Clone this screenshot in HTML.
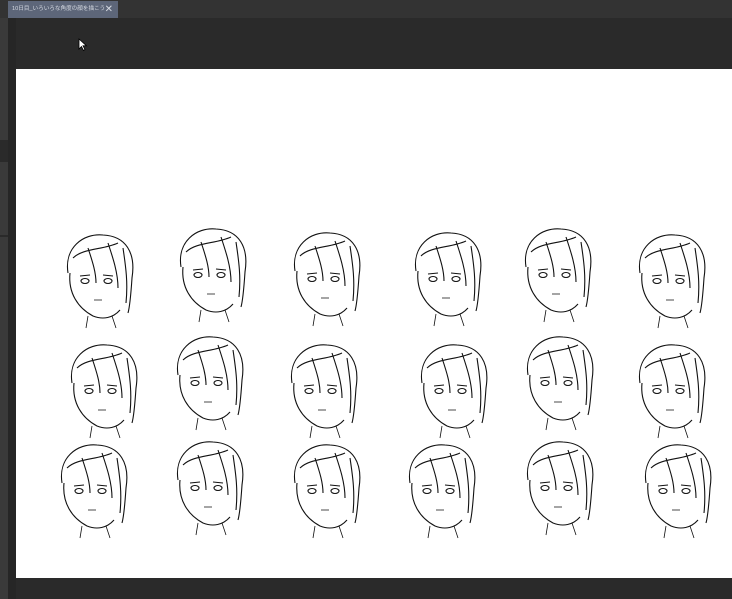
<!DOCTYPE html>
<html><head><meta charset="utf-8"><style>
html,body{margin:0;padding:0;width:732px;height:599px;overflow:hidden;background:#2a2a2a;font-family:"Liberation Sans","Noto Sans CJK JP",sans-serif}
.top{position:absolute;left:0;top:0;width:732px;height:18px;background:#333}
.tab{position:absolute;left:8px;top:1px;width:110px;height:17px;background:#5d6679;color:#d6dae2;font-size:5.6px;line-height:17px;padding-left:4px;box-sizing:border-box;white-space:nowrap}
.tab span{position:absolute;right:5px;top:0;font-size:10px}
.left{position:absolute;left:0;top:18px;width:8px;height:581px;background:#3a3a3a}
.left2{position:absolute;left:8px;top:18px;width:8px;height:581px;background:#262626}
.canvas{position:absolute;left:16px;top:69px;width:716px;height:509px;background:#fff}
</style></head><body>
<div class="top"></div>
<div class="tab">10日目_いろいろな角度の顔を描こう<span>✕</span></div>
<div class="left"></div><div class="left2"></div>
<div style="position:absolute;left:0;top:140px;width:8px;height:22px;background:#2a2a2a"></div>
<div style="position:absolute;left:0;top:235px;width:8px;height:2px;background:#2a2a2a"></div>
<svg style="position:absolute;left:78px;top:38px" width="10" height="14"><path d="M1 1 L1 11 L3.5 8.5 L5.5 12.5 L7 11.5 L5 7.8 L8.5 7.8 Z" fill="#fff" stroke="#000" stroke-width=".8"/></svg>
<div class="canvas"></div>
<svg style="position:absolute;left:0;top:0" width="732" height="599">
<defs>
<g id="h" fill="none" stroke="#111" stroke-width="1.1">
<path d="M-30 -5 C-34 -30 -15 -45 5 -43 C28 -42 38 -25 34 0 C33 15 32 28 30 35"/>
<path d="M-28 -5 C-30 15 -20 30 -5 38 C5 42 15 40 22 32"/>
<path d="M-25 -20 C-15 -30 5 -28 20 -35 M-10 -30 C-5 -15 -2 -5 -2 5 M10 -35 C15 -20 20 -5 20 10 M25 -30 C28 -10 30 5 28 25"/>
<path d="M-18 -2 L-8 -3 M5 -3 L15 -2"/>
<ellipse cx="-13" cy="3" rx="4" ry="2.5"/><ellipse cx="10" cy="3" rx="4" ry="2.5"/>
<path d="M-4 22 L4 22 M-10 38 L-12 50 M14 38 L18 50" stroke-width=".8"/>
</g>
</defs>
<g>
<use href="#h" x="98" y="278"/><use href="#h" x="211" y="272"/><use href="#h" x="325" y="276"/><use href="#h" x="446" y="276"/><use href="#h" x="556" y="272"/><use href="#h" x="670" y="278"/>
<use href="#h" x="102" y="388"/><use href="#h" x="208" y="380"/><use href="#h" x="322" y="388"/><use href="#h" x="452" y="388"/><use href="#h" x="558" y="380"/><use href="#h" x="670" y="388"/>
<use href="#h" x="92" y="488"/><use href="#h" x="208" y="485"/><use href="#h" x="325" y="488"/><use href="#h" x="440" y="488"/><use href="#h" x="558" y="485"/><use href="#h" x="676" y="488"/>
</g>
</svg>
</body></html>
